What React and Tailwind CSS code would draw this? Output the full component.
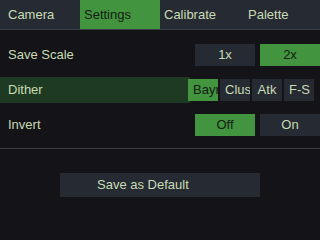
import React from "react";

const F = { fontFamily: '"Liberation Sans", Arial, sans-serif' };

function Btn({ active, children, className = "" }) {
  return (
    <div
      className={`h-[22px] flex items-center justify-center text-[13px] ${
        active ? "bg-[#43943f] text-[#142014]" : "bg-[#252a33] text-[#c8dcb4]"
      } ${className}`}
    >
      {children}
    </div>
  );
}

function DBtn({ active, children }) {
  return (
    <div
      className={`w-[30px] h-[22px] leading-[22px] px-[5px] text-center overflow-hidden whitespace-nowrap text-[13px] ${
        active ? "bg-[#43943f] text-[#142014]" : "bg-[#252a33] text-[#c8dcb4]"
      }`}
    >
      {children}
    </div>
  );
}

export default function App() {
  return (
    <div style={F} className="w-[320px] h-[240px] bg-[#131318] flex flex-col overflow-hidden">
      <div className="h-[29px] bg-[#262a33] flex text-[13px] text-[#c8dcb4] border-b border-[#3a3e45] box-content">
        <div className="w-[80px] flex items-center pl-[8px]">Camera</div>
        <div className="w-[80px] flex items-center pl-[4px] bg-[#43943f] text-[#142014]">Settings</div>
        <div className="w-[80px] flex items-center pl-[4px]">Calibrate</div>
        <div className="w-[80px] flex items-center pl-[8px]">Palette</div>
      </div>
      <div className="h-[14px]" />
      <div className="h-[22px] flex items-center">
        <div className="flex-1 pl-[8px] text-[13px] text-[#c8dcb4]">Save Scale</div>
        <Btn className="w-[60px]">1x</Btn>
        <div className="w-[5px]" />
        <Btn active className="w-[60px]">2x</Btn>
      </div>
      <div className="h-[11px]" />
      <div className="h-[26px] flex items-center">
        <div className="w-[190px] h-[26px] bg-[#1f3a22] flex items-center pl-[8px] text-[13px] text-[#c8dcb4] mr-[-2px]">
          Dither
        </div>
        <div className="flex gap-[2px] relative">
          <DBtn active>Bayr</DBtn>
          <DBtn>Clus</DBtn>
          <DBtn>Atk</DBtn>
          <DBtn>F-S</DBtn>
        </div>
      </div>
      <div className="h-[11px]" />
      <div className="h-[22px] flex items-center">
        <div className="flex-1 pl-[8px] text-[13px] text-[#c8dcb4]">Invert</div>
        <Btn active className="w-[60px]">Off</Btn>
        <div className="w-[5px]" />
        <Btn className="w-[60px]">On</Btn>
      </div>
      <div className="h-[12px]" />
      <div className="h-px bg-[#3a3d42]" />
      <div className="h-[24px]" />
      <div className="flex justify-center">
        <div className="w-[200px] h-[24px] bg-[#252a33] flex items-center pl-[37px] text-[13px] text-[#c8dcb4]">
          Save as Default
        </div>
      </div>
    </div>
  );
}
